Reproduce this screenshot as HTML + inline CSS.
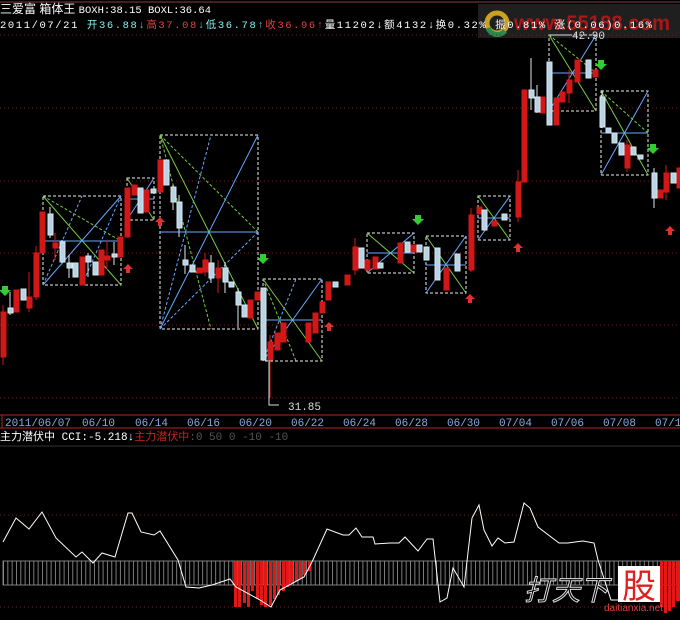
<!DOCTYPE html>
<html><head><meta charset="utf-8"><style>
html,body{margin:0;padding:0;background:#000;width:680px;height:620px;overflow:hidden}
svg{display:block}
text{font-family:"Liberation Mono","Noto Sans CJK SC",monospace}
.cn{font-family:"Liberation Sans","Noto Sans CJK SC",sans-serif}
</style></head><body>
<svg width="680" height="620" viewBox="0 0 680 620" xmlns="http://www.w3.org/2000/svg">
<defs>
<pattern id="vl" x="3" y="0" width="4.33" height="10" patternUnits="userSpaceOnUse"><line x1="0.5" y1="0" x2="0.5" y2="10" stroke="#9a9a9a" stroke-width="0.8"/></pattern>
</defs>
<rect width="680" height="620" fill="#000"/>
<!-- watermark top -->
<rect x="478" y="4" width="202" height="34" fill="#333" opacity="0.6"/>
<circle cx="497" cy="23" r="10" fill="none" stroke="#c9a020" stroke-width="5"/>
<path d="M488 28 A10 10 0 0 0 505 31" stroke="#2a8a4a" stroke-width="5" fill="none"/>
<text x="514" y="30" fill="#a81818" style="font-size:21px;font-weight:bold;font-family:'Liberation Sans',sans-serif" textLength="156" lengthAdjust="spacingAndGlyphs">www.55188.com</text>
<!-- header -->
<text x="0" y="13" fill="#fff" style="font-size:12px" class="cn">三爱富 箱体王 <tspan style="font-family:'Liberation Mono',monospace;font-size:10.5px">BOXH:38.15 BOXL:36.64</tspan></text>
<text x="0" y="28" style="font-size:10.5px" textLength="652" lengthAdjust="spacing"><tspan fill="#fff">2011/07/21 </tspan><tspan fill="#8ee">开36.88</tspan><tspan fill="#6cc">↓</tspan><tspan fill="#e04040">高37.08</tspan><tspan fill="#6cc">↓</tspan><tspan fill="#8ee">低36.78</tspan><tspan fill="#6cc">↑</tspan><tspan fill="#e04040">收36.96</tspan><tspan fill="#e04040">↑</tspan><tspan fill="#fff">量11202</tspan><tspan fill="#fff">↓</tspan><tspan fill="#fff">额4132</tspan><tspan fill="#fff">↓</tspan><tspan fill="#fff">换0.32% 振0.81% 涨(0.06)0.16%</tspan></text>
<line x1="0" y1="2" x2="680" y2="2" stroke="#804040"/>
<!-- dotted grid -->
<g stroke="#6a2020" stroke-dasharray="1,3">
<line x1="0" y1="35" x2="680" y2="35"/><line x1="0" y1="108" x2="680" y2="108"/>
<line x1="0" y1="181" x2="680" y2="181"/><line x1="0" y1="253" x2="680" y2="253"/>
<line x1="0" y1="325" x2="680" y2="325"/><line x1="0" y1="398" x2="680" y2="398"/>
<line x1="0" y1="515" x2="680" y2="515"/><line x1="0" y1="607" x2="680" y2="607"/>
</g>
<!-- boxes -->
<g fill="none" stroke-width="1">
<rect x="43" y="196" width="78" height="89" stroke="#eee" stroke-dasharray="3,2"/><line x1="43" y1="196" x2="121" y2="285" stroke="#7c4"/><line x1="43" y1="285" x2="121" y2="196" stroke="#6af"/><line x1="43" y1="241" x2="121" y2="241" stroke="#6af"/><line x1="43" y1="196" x2="121" y2="241" stroke="#7c4" stroke-dasharray="3,2"/><line x1="43" y1="285" x2="82" y2="196" stroke="#6af" stroke-dasharray="3,2"/><line x1="82" y1="285" x2="121" y2="196" stroke="#6af" stroke-dasharray="3,2"/>
<rect x="127" y="178" width="27" height="42" stroke="#eee" stroke-dasharray="3,2"/><line x1="127" y1="178" x2="154" y2="220" stroke="#7c4"/><line x1="127" y1="220" x2="154" y2="178" stroke="#6af"/><line x1="127" y1="199" x2="154" y2="199" stroke="#6af"/>
<rect x="160" y="135" width="98" height="194" stroke="#eee" stroke-dasharray="3,2"/><line x1="160" y1="135" x2="258" y2="329" stroke="#7c4"/><line x1="160" y1="329" x2="258" y2="135" stroke="#6af"/><line x1="160" y1="232" x2="258" y2="232" stroke="#6af"/><line x1="160" y1="135" x2="258" y2="232" stroke="#7c4" stroke-dasharray="3,2"/><line x1="160" y1="135" x2="211" y2="329" stroke="#7c4" stroke-dasharray="3,2"/><line x1="160" y1="329" x2="211" y2="135" stroke="#6af" stroke-dasharray="3,2"/><line x1="160" y1="329" x2="258" y2="232" stroke="#6af" stroke-dasharray="3,2"/>
<rect x="263" y="279" width="59" height="82" stroke="#eee" stroke-dasharray="3,2"/><line x1="263" y1="279" x2="322" y2="361" stroke="#7c4"/><line x1="263" y1="361" x2="322" y2="279" stroke="#6af"/><line x1="263" y1="320" x2="322" y2="320" stroke="#6af"/><line x1="263" y1="279" x2="296" y2="361" stroke="#7c4" stroke-dasharray="3,2"/><line x1="263" y1="361" x2="296" y2="279" stroke="#6af" stroke-dasharray="3,2"/>
<rect x="367" y="233" width="47" height="40" stroke="#eee" stroke-dasharray="3,2"/><line x1="367" y1="233" x2="414" y2="273" stroke="#7c4"/><line x1="367" y1="273" x2="414" y2="233" stroke="#6af"/><line x1="367" y1="253" x2="414" y2="253" stroke="#6af"/>
<rect x="426" y="236" width="40" height="57" stroke="#eee" stroke-dasharray="3,2"/><line x1="426" y1="236" x2="466" y2="293" stroke="#7c4"/><line x1="426" y1="293" x2="466" y2="236" stroke="#6af"/><line x1="426" y1="265" x2="466" y2="265" stroke="#6af"/>
<rect x="478" y="196" width="32" height="44" stroke="#eee" stroke-dasharray="3,2"/><line x1="478" y1="196" x2="510" y2="240" stroke="#7c4"/><line x1="478" y1="240" x2="510" y2="196" stroke="#6af"/><line x1="478" y1="218" x2="510" y2="218" stroke="#6af"/>
<rect x="549" y="35" width="47" height="76" stroke="#eee" stroke-dasharray="3,2"/><line x1="549" y1="35" x2="596" y2="111" stroke="#7c4"/><line x1="549" y1="111" x2="596" y2="35" stroke="#6af"/><line x1="549" y1="73" x2="596" y2="73" stroke="#6af"/><line x1="549" y1="35" x2="596" y2="73" stroke="#7c4" stroke-dasharray="3,2"/>
<rect x="601" y="91" width="47" height="84" stroke="#eee" stroke-dasharray="3,2"/><line x1="601" y1="91" x2="648" y2="175" stroke="#7c4"/><line x1="601" y1="175" x2="648" y2="91" stroke="#6af"/><line x1="601" y1="133" x2="648" y2="133" stroke="#6af"/><line x1="601" y1="91" x2="648" y2="133" stroke="#7c4" stroke-dasharray="3,2"/>
</g>
<!-- candles: red -->
<g fill="#d01818" stroke="#d01818">
<line x1="3" y1="305" x2="3" y2="365"/><rect x="1" y="312" width="5" height="45"/>
<rect x="14" y="290" width="5" height="22"/>
<line x1="29" y1="272" x2="29" y2="312"/><rect x="27" y="297" width="5" height="11"/>
<line x1="36" y1="246" x2="36" y2="300"/><rect x="34" y="253" width="5" height="44"/>
<rect x="40" y="212" width="5" height="41"/>
<line x1="55" y1="233" x2="55" y2="260"/><rect x="53" y="243" width="5" height="5"/>
<rect x="80" y="257" width="5" height="28"/>
<rect x="99" y="250" width="5" height="25"/>
<line x1="107" y1="240" x2="107" y2="270"/><rect x="105" y="256" width="5" height="4"/>
<rect x="118" y="237" width="5" height="20"/>
<rect x="125" y="188" width="5" height="49"/>
<rect x="132" y="185" width="5" height="10"/>
<rect x="144" y="190" width="5" height="22"/>
<rect x="158" y="160" width="5" height="32"/>
<rect x="197" y="268" width="5" height="5"/>
<line x1="205" y1="253" x2="205" y2="276"/><rect x="203" y="260" width="5" height="12"/>
<line x1="218" y1="260" x2="218" y2="293"/><rect x="216" y="268" width="5" height="10"/>
<rect x="248" y="300" width="5" height="18"/>
<rect x="255" y="292" width="5" height="8"/>
<line x1="270" y1="335" x2="270" y2="398"/><rect x="268" y="342" width="5" height="18"/>
<rect x="275" y="333" width="5" height="17"/>
<rect x="281" y="323" width="5" height="19"/>
<rect x="306" y="323" width="5" height="19"/>
<rect x="313" y="313" width="5" height="20"/>
<rect x="320" y="302" width="5" height="11"/>
<rect x="326" y="282" width="5" height="18"/>
<rect x="345" y="275" width="5" height="10"/>
<line x1="355" y1="238" x2="355" y2="275"/><rect x="353" y="247" width="5" height="23"/>
<rect x="365" y="260" width="5" height="10"/>
<rect x="373" y="257" width="5" height="12"/>
<rect x="398" y="243" width="5" height="20"/>
<rect x="411" y="245" width="5" height="7"/>
<rect x="444" y="268" width="5" height="22"/>
<line x1="471" y1="208" x2="471" y2="272"/><rect x="469" y="215" width="5" height="55"/>
<rect x="477" y="207" width="5" height="7"/>
<rect x="492" y="221" width="5" height="5"/>
<line x1="518" y1="170" x2="518" y2="222"/><rect x="516" y="182" width="5" height="35"/>
<rect x="522" y="90" width="5" height="92"/>
<rect x="540" y="97" width="5" height="16"/>
<rect x="554" y="98" width="5" height="27"/>
<rect x="560" y="92" width="5" height="10"/>
<line x1="569" y1="70" x2="569" y2="103"/><rect x="567" y="80" width="5" height="13"/>
<rect x="575" y="60" width="5" height="22"/>
<rect x="593" y="70" width="5" height="7"/>
<line x1="627" y1="140" x2="627" y2="172"/><rect x="625" y="145" width="5" height="23"/>
<rect x="658" y="190" width="5" height="8"/>
<line x1="666" y1="165" x2="666" y2="200"/><rect x="664" y="173" width="5" height="19"/>
<rect x="677" y="168" width="4" height="20"/>
</g>
<!-- candles: white -->
<g fill="#b8d4e4" stroke="#d8e8f0">
<line x1="10" y1="292" x2="10" y2="315"/><rect x="8" y="308" width="5" height="5"/>
<rect x="21" y="289" width="5" height="11"/>
<line x1="50" y1="207" x2="50" y2="238"/><rect x="48" y="214" width="5" height="21"/>
<line x1="62" y1="240" x2="62" y2="263"/><rect x="60" y="242" width="5" height="20"/>
<line x1="69" y1="255" x2="69" y2="278"/><rect x="67" y="263" width="5" height="5"/>
<rect x="73" y="263" width="5" height="14"/>
<line x1="88" y1="253" x2="88" y2="277"/><rect x="86" y="256" width="5" height="6"/>
<rect x="93" y="262" width="5" height="13"/>
<line x1="114" y1="242" x2="114" y2="265"/><rect x="112" y="254" width="5" height="3"/>
<rect x="138" y="188" width="5" height="25"/>
<rect x="151" y="189" width="5" height="4"/>
<rect x="164" y="160" width="5" height="25"/>
<line x1="173" y1="185" x2="173" y2="210"/><rect x="171" y="187" width="5" height="15"/>
<line x1="179" y1="195" x2="179" y2="237"/><rect x="177" y="202" width="5" height="26"/>
<line x1="185" y1="245" x2="185" y2="274"/><rect x="183" y="260" width="5" height="5"/>
<rect x="190" y="265" width="5" height="7"/>
<line x1="211" y1="255" x2="211" y2="283"/><rect x="209" y="263" width="5" height="15"/>
<line x1="225" y1="262" x2="225" y2="293"/><rect x="223" y="268" width="5" height="14"/>
<rect x="229" y="282" width="5" height="5"/>
<line x1="238" y1="288" x2="238" y2="328"/><rect x="236" y="292" width="5" height="13"/>
<rect x="242" y="305" width="5" height="12"/>
<rect x="261" y="288" width="5" height="72"/>
<rect x="333" y="282" width="5" height="5"/>
<rect x="359" y="248" width="5" height="20"/>
<rect x="378" y="263" width="5" height="5"/>
<rect x="405" y="242" width="5" height="10"/>
<rect x="417" y="245" width="5" height="7"/>
<rect x="424" y="247" width="5" height="13"/>
<rect x="435" y="248" width="5" height="32"/>
<rect x="455" y="254" width="5" height="17"/>
<rect x="482" y="210" width="5" height="20"/>
<rect x="502" y="214" width="5" height="6"/>
<line x1="531" y1="58" x2="531" y2="110"/><rect x="529" y="90" width="5" height="8"/>
<line x1="537" y1="85" x2="537" y2="113"/><rect x="535" y="97" width="5" height="15"/>
<rect x="547" y="62" width="5" height="63"/>
<rect x="586" y="60" width="5" height="18"/>
<line x1="602" y1="90" x2="602" y2="128"/><rect x="600" y="97" width="5" height="30"/>
<rect x="606" y="128" width="5" height="5"/>
<rect x="612" y="133" width="5" height="10"/>
<rect x="619" y="143" width="5" height="12"/>
<rect x="631" y="147" width="5" height="8"/>
<rect x="638" y="155" width="5" height="4"/>
<line x1="654" y1="168" x2="654" y2="208"/><rect x="652" y="173" width="5" height="25"/>
<rect x="671" y="173" width="5" height="10"/>
</g>
<!-- arrows -->
<g fill="#3c3">
<path d="M2 286h6v4h3l-6 6-6-6h3z"/><path d="M260 254h6v4h3l-6 6-6-6h3z"/><path d="M415 215h6v4h3l-6 6-6-6h3z"/><path d="M598 60h6v4h3l-6 6-6-6h3z"/><path d="M650 144h6v4h3l-6 6-6-6h3z"/>
</g>
<g fill="#e03030">
<path d="M128 264l5 5h-3v4h-4v-4h-3z"/><path d="M160 217l5 5h-3v4h-4v-4h-3z"/><path d="M329 322l5 5h-3v4h-4v-4h-3z"/><path d="M470 294l5 5h-3v4h-4v-4h-3z"/><path d="M518 243l5 5h-3v4h-4v-4h-3z"/><path d="M670 226l5 5h-3v4h-4v-4h-3z"/>
</g>
<!-- labels -->
<path d="M269 360v45h10" stroke="#ddd" fill="none"/>
<text x="288" y="410" fill="#ddd" style="font-size:11px">31.85</text>
<path d="M551 35h20" stroke="#ddd"/>
<text x="572" y="39" fill="#ddd" style="font-size:11px">42.90</text>
<!-- axis -->
<line x1="0" y1="415" x2="680" y2="415" stroke="#b02828"/>
<line x1="0" y1="428" x2="680" y2="428" stroke="#b02828"/>
<line x1="2" y1="415" x2="2" y2="428" stroke="#b02828"/>
<g fill="#8ad" style="font-size:11px">
<text x="5" y="426">2011/06/07</text><text x="82" y="426">06/10</text><text x="135" y="426">06/14</text><text x="187" y="426">06/16</text><text x="239" y="426">06/20</text><text x="291" y="426">06/22</text><text x="343" y="426">06/24</text><text x="395" y="426">06/28</text><text x="447" y="426">06/30</text><text x="499" y="426">07/04</text><text x="551" y="426">07/06</text><text x="603" y="426">07/08</text><text x="655" y="426">07/12</text>
</g>
<text x="0" y="440" style="font-size:11px" fill="#fff"><tspan class="cn">主力潜伏中</tspan> CCI:-5.218<tspan>↓</tspan><tspan fill="#d02020" class="cn">主力潜伏中</tspan><tspan fill="#555">:0 50 0 -10 -10</tspan></text>
<line x1="0" y1="446" x2="680" y2="446" stroke="#333"/>
<!-- indicator grid -->
<rect x="3" y="561" width="677" height="24" fill="url(#vl)" stroke="#9a9a9a" stroke-width="0.8"/>
<!-- red bars -->
<g fill="#e01818">
<rect x="234" y="561" width="3" height="46"/><rect x="238" y="561" width="3" height="46"/><rect x="243" y="561" width="3" height="42"/><rect x="247" y="561" width="3" height="46"/><rect x="251" y="561" width="3" height="30"/><rect x="256" y="561" width="3" height="38"/><rect x="260" y="561" width="3" height="44"/><rect x="264" y="561" width="3" height="46"/><rect x="269" y="561" width="3" height="44"/><rect x="273" y="561" width="3" height="38"/><rect x="277" y="561" width="3" height="34"/><rect x="282" y="561" width="3" height="30"/><rect x="286" y="561" width="3" height="26"/><rect x="290" y="561" width="3" height="22"/><rect x="295" y="561" width="3" height="20"/><rect x="299" y="561" width="3" height="18"/><rect x="303" y="561" width="3" height="14"/><rect x="308" y="561" width="3" height="10"/>
<rect x="660" y="561" width="3" height="46"/><rect x="664" y="561" width="3" height="52"/><rect x="668" y="561" width="3" height="50"/><rect x="672" y="561" width="3" height="46"/><rect x="676" y="561" width="4" height="40"/>
</g>
<polyline fill="none" stroke="#fff" stroke-width="1" points="3,542 16,518 29,529 42,512 56,538 76,557 82,552 93,563 102,553 115,557 128,513 132,513 141,532 154,535 160,531 178,560 186,587 199,588 212,585 230,579 236,587 260,600 271,607 280,590 304,577 312,562 327,529 343,535 349,535 356,528 362,537 373,537 375,544 390,543 399,543 405,537 418,551 427,539 433,539 440,602 447,598 453,568 464,587 472,518 479,505 484,530 492,546 498,538 505,543 514,542 524,503 530,508 538,527 559,543 568,543 575,542 583,541 594,543 598,560 611,600 625,600 640,598"/>
<!-- bottom watermark -->
<text x="524" y="600" fill="#000" stroke="#ddd" stroke-width="1" style="font-size:28px;font-style:italic" class="cn">打天下</text>
<rect x="618" y="566" width="42" height="36" fill="#fff"/>
<text x="622" y="598" fill="#e02020" style="font-size:34px" class="cn">股</text>
<text x="604" y="611" fill="#e04040" style="font-size:10px;font-family:'Liberation Sans',sans-serif">daitianxia.net</text>
</svg>
</body></html>
